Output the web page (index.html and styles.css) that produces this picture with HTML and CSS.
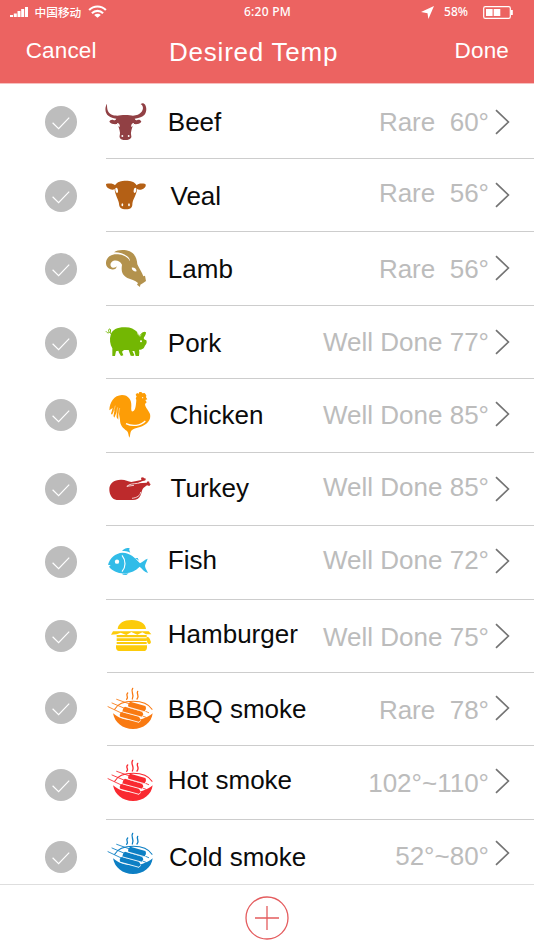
FILE: index.html
```html
<!DOCTYPE html>
<html lang="en">
<head>
<meta charset="utf-8">
<title>Desired Temp</title>
<link rel="stylesheet" href="styles.css">
</head>
<body>
<svg class="defs" aria-hidden="true">
  <symbol id="check" viewBox="0 0 32 32"><circle cx="16" cy="16" r="16" fill="#bdbdbd"/><path d="M7.6 16.8l6 5.8L24.2 11.6" fill="none" stroke="#fff" stroke-width="1.2"/></symbol>
  <symbol id="chevron" viewBox="0 0 15 26"><path d="M1 1.2L13.4 13 1 24.8" fill="none" stroke="#747474" stroke-width="1.7"/></symbol>
  <symbol id="smoke" viewBox="225 24 150 150">
    <path d="M249 115C260 124 270 130 284 133C300 137 322 137 336 132C349 128 360 122 368 115C365 143 340 162 309 162C278 162 254 143 249 115Z" fill="currentColor"/>
    <g fill="currentColor">
      <path d="M301 80L346 93Q351 100 343 111L295 97Q292 87 301 80Z"/>
      <path d="M285 95L336 110Q344 119 335 127L278 112Q276 101 285 95Z"/>
      <path d="M275 111L325 124Q335 132 328 142L271 127Q266 117 275 111Z"/>
    </g>
    <g fill="none" stroke="currentColor" stroke-width="3.2" stroke-linecap="round">
      <path d="M254 103C263 86 284 79 310 79C337 79 357 89 366 103"/>
      <path d="M260 73L302 88M246 84L286 101M234 95L276 115" stroke-width="2.6"/>
      <path d="M347 109L356 113M338 123L348 127" stroke-width="2.6"/>
      <path d="M293 54C285 62 298 65 290 73M308 40C300 51 315 59 307 72M323 49C318 57 330 61 321 72" stroke-width="4"/>
    </g>
    <path d="M279 111L334 126L341 121M294 96L343 110L349 105M269 126L327 142L332 136" fill="none" stroke="#fff" stroke-width="2.6"/>
  </symbol>
</svg>
<div class="screen">
  <header class="header">
    <div class="status">
      <div class="status-left">
        <svg class="signal" viewBox="0 0 18 10"><path d="M0 8h3v2H0zM3.8 6.5h3V10h-3zM7.5 4h3v6h-3zM11.2 2h3v8h-3zM15 0h3v10h-3z" fill="#fff"/></svg>
        <span class="carrier">中国移动</span>
        <svg class="wifi" viewBox="0 0 20 14"><g fill="none" stroke="#fff" stroke-width="2.3"><path d="M1 5.4C6 .4 14 .4 19 5.4M4 8.9C7.4 5.5 12.6 5.5 16 8.9"/></g><path d="M6.4 10.9C8.4 9 11.6 9 13.6 10.9L10 13.6Z" fill="#fff"/></svg>
      </div>
      <span class="clock">6:20 PM</span>
      <div class="status-right">
        <svg class="locate" viewBox="0 0 13 13"><path d="M13 0L7.4 13 6.5 7.2 0 6Z" fill="#fff"/></svg>
        <span class="percent">58%</span>
        <svg class="battery" viewBox="0 0 30 13"><rect x=".7" y=".7" width="26.6" height="11.6" rx="1.6" fill="none" stroke="#fff" stroke-width="1.2"/><path d="M3 3h6.6v7H3zM10.7 3h6.6v7h-6.6zM28 4h1.8v5H28z" fill="#fff"/></svg>
      </div>
    </div>
    <nav class="nav"><span class="cancel">Cancel</span><h1>Desired Temp</h1><span class="done">Done</span></nav>
  </header>
  <ul class="list">
    <li class="row beef"><svg class="check"><use href="#check"/></svg><div class="content">
      <svg class="icon" viewBox="225 21 150 150"><path fill="currentColor" d="M231 41C224 52 224 70 236 78C244 84 254 86 259 86C256 91 254 92 250 90C244 88 240 91 238 95C244 103 254 103 262 102C266 110 269 120 270 128C270 135 268 137 269 142C272 150 278 150 286 150C294 150 300 150 304 142C305 137 302 134 303 128C304 119 307 110 311 102C319 103 328 103 334 95C331 90 327 88 321 91C317 91 316 89 314 86C324 85 336 82 343 75C351 66 351 46 342 41C338 39 335 40 332 43C340 46 341 58 335 65C328 73 320 76 309 77C300 74 272 74 262 77C250 76 240 74 235 65C231 58 231 50 231 41Z"/><g fill="#fff"><path d="M261 99C267 99 271 105 269 111C264 110 261 104 261 99ZM312 99C306 99 302 105 304 111C309 110 312 104 312 99Z"/><circle cx="277" cy="138" r="2.8"/><circle cx="296" cy="138" r="2.8"/></g></svg>
      <span class="label">Beef</span><span class="value">Rare  60°</span><svg class="chevron"><use href="#chevron"/></svg></div></li>
    <li class="row veal"><svg class="check"><use href="#check"/></svg><div class="content">
      <svg class="icon" viewBox="225 243 150 150"><path fill="currentColor" d="M255 286C260 275 275 272 288 272C301 272 315 275 320 286C324 281 334 279 346 282C350 288 344 297 333 299C327 300 324 299 321 297C321 310 311 325 308 336C306 342 309 348 303 354C298 359 278 359 272 354C266 348 268 342 266 336C263 325 254 310 254 297C250 300 242 300 235 295C230 292 228 287 228 282C240 279 251 281 255 286Z"/><g fill="#fff"><ellipse cx="260" cy="301" rx="4" ry="8" transform="rotate(-12 260 301)"/><ellipse cx="315" cy="301" rx="4" ry="8" transform="rotate(12 315 301)"/><ellipse cx="277" cy="344" rx="2.6" ry="4.5"/><ellipse cx="297" cy="344" rx="2.6" ry="4.5"/></g></svg>
      <span class="label">Veal</span><span class="value">Rare  56°</span><svg class="chevron"><use href="#chevron"/></svg></div></li>
    <li class="row lamb"><svg class="check"><use href="#check"/></svg><div class="content">
      <svg class="icon" viewBox="225 24 150 150"><path fill="currentColor" d="M252 52C263 43 285 43 299 49C316 57 321 72 322 88C327 100 336 112 340 124L345 122L348 138C342 142 337 146 331 149L330 156L321 149L324 144C315 136 303 133 292 129C276 120 273 108 276 89C269 76 254 73 245 81C238 88 242 97 249 98C255 99 258 96 260 93C260 102 252 105 244 103C232 100 227 92 228 82C230 65 246 56 264 58C282 60 294 67 300 79C302 66 278 51 252 52Z"/><path fill="#fff" d="M305 98C313 97 319 101 320 109C313 110 306 107 305 98Z"/></svg>
      <span class="label">Lamb</span><span class="value">Rare  56°</span><svg class="chevron"><use href="#chevron"/></svg></div></li>
    <li class="row pork"><svg class="check"><use href="#check"/></svg><div class="content">
      <svg class="icon" viewBox="225 246 150 150"><path fill="currentColor" d="M242 300C246 284 262 277 283 277C300 276 312 282 323 292C325 300 329 303 333 296C338 290 344 288 348 292C348 298 345 303 342 307C340 311 342 314 349 316C351 321 350 326 347 329C343 333 344 339 337 342C334 345 330 344 327 344L328 352L327 363L317 363L313 348L307 348L313 360L310 363L302 362L296 345L282 345L276 350L280 361L273 363L267 353L265 347L258 349L255 363L247 363L247 340C240 328 238 313 242 300Z"/><path fill="none" stroke="currentColor" stroke-width="3" d="M243 297C239 293 244 283 240 282C234 281 235 292 239 292C234 295 231 293 228 289"/><path d="M322 289C323 300 329 307 334 300" fill="none" stroke="#fff" stroke-width="2"/><circle cx="333" cy="319" r="3" fill="#fff"/></svg>
      <span class="label">Pork</span><span class="value">Well Done 77°</span><svg class="chevron"><use href="#chevron"/></svg></div></li>
    <li class="row chicken"><svg class="check"><use href="#check"/></svg><div class="content">
      <svg class="icon" viewBox="225 30 150 150"><path fill="currentColor" d="M238 91C239 66 252 46 276 45C295 45 305 60 304 77C303 89 304 96 309 94C317 90 318 74 319 59C316 56 318 52 320 50L317 44L321 39L326 41L328 36L334 36L337 40L344 39L349 46L348 52L352 58L346 60L350 67L345 72C346 84 356 91 360 102C364 119 352 131 338 138C324 144 308 145 303 154C300 160 301 168 298 173C295 166 296 159 291 153C279 144 270 136 270 119L266 98L265 119L259 111L260 96L253 113L250 107L254 90L246 104L243 101L248 84Z"/><g fill="none" stroke="#fff"><path stroke-width="3.6" d="M288 131C307 140 331 138 346 123"/><path stroke-width="1.2" d="M267 119Q264 99 269 84M259 114Q258 98 263 82M249 108Q250 92 256 77"/></g><circle cx="338" cy="53" r="1.8" fill="#fff"/></svg>
      <span class="label">Chicken</span><span class="value">Well Done 85°</span><svg class="chevron"><use href="#chevron"/></svg></div></li>
    <li class="row turkey"><svg class="check"><use href="#check"/></svg><div class="content">
      <svg class="icon" viewBox="225 252 150 150"><path fill="currentColor" d="M238 330C237 309 253 298 275 299C286 299 295 304 304 306L334 300L333 293L339 292L343 295L348 296L345 302L339 303L324 310L350 308L353 304L358 305L358 309L362 313L358 318L351 316L341 323C333 331 336 344 327 353C320 361 307 360 290 360L260 360C247 358 239 346 238 330Z"/><path d="M291 319C299 311 308 312 323 310L344 303M290 319L312 316M306 355C321 353 331 347 332 336" fill="none" stroke="#fff" stroke-width="2.3"/></svg>
      <span class="label">Turkey</span><span class="value">Well Done 85°</span><svg class="chevron"><use href="#chevron"/></svg></div></li>
    <li class="row fish"><svg class="check"><use href="#check"/></svg><div class="content">
      <svg class="icon" viewBox="225 21 150 150"><path fill="currentColor" d="M234 104C239 85 255 69 278 68C300 68 316 84 330 100C340 95 344 88 353 86C350 96 345 103 345 108C346 116 351 122 354 129C343 126 337 117 329 110C317 122 303 129 285 130C263 131 247 122 237 110L242 106ZM276 63C282 55 289 54 299 54C296 59 299 63 301 68C292 63 284 63 276 63ZM275 131L296 130L289 135L280 134ZM315 84L323 84L327 92Q321 88 315 84Z"/><circle cx="261" cy="95" r="6.5" fill="#fff"/><path d="M276 76C288 91 288 111 276 125" fill="none" stroke="#fff" stroke-width="3.4"/></svg>
      <span class="label">Fish</span><span class="value">Well Done 72°</span><svg class="chevron"><use href="#chevron"/></svg></div></li>
    <li class="row hamburger"><svg class="check"><use href="#check"/></svg><div class="content">
      <svg class="icon" viewBox="225 240 150 150"><path fill="currentColor" d="M263 297C264 280 282 270 305 270C330 270 347 281 348 297ZM249 304H356L364 313H348L337 307L322 314L304 306L289 315L272 308L260 313L243 314ZM260 315H350V322H260ZM260 325H350V333H260ZM260 336H350V342H260ZM258 346H351V353Q350 363 341 363H267Q259 362 258 353ZM350 320C359 321 360 328 362 333C365 339 359 344 355 341C351 339 352 333 350 330Z"/></svg>
      <span class="label">Hamburger</span><span class="value">Well Done 75°</span><svg class="chevron"><use href="#chevron"/></svg></div></li>
    <li class="row bbq"><svg class="check"><use href="#check"/></svg><div class="content"><svg class="icon"><use href="#smoke"/></svg>
      <span class="label">BBQ smoke</span><span class="value">Rare  78°</span><svg class="chevron"><use href="#chevron"/></svg></div></li>
    <li class="row hot"><svg class="check"><use href="#check"/></svg><div class="content"><svg class="icon"><use href="#smoke"/></svg>
      <span class="label">Hot smoke</span><span class="value">102°~110°</span><svg class="chevron"><use href="#chevron"/></svg></div></li>
    <li class="row cold"><svg class="check"><use href="#check"/></svg><div class="content"><svg class="icon"><use href="#smoke"/></svg>
      <span class="label">Cold smoke</span><span class="value">52°~80°</span><svg class="chevron"><use href="#chevron"/></svg></div></li>
  </ul>
  <footer class="footer"><svg class="add" viewBox="0 0 44 44"><g fill="none" stroke="#e45c5e" stroke-width="1.3"><circle cx="22" cy="22" r="21"/><path d="M10 22h24M22 10v24"/></g></svg></footer>
</div>
</body>
</html>
```
FILE: styles.css
```css
* { box-sizing: border-box; }
body { margin: 0; background: #fff; font-family: "Liberation Sans", Arial, sans-serif; }
svg { display: block; flex: none; }
.defs { position: absolute; width: 0; height: 0; }
.screen { width: 534px; height: 950px; display: flex; flex-direction: column; overflow: hidden; }

.header { height: 84px; flex: none; background: #ec6361; color: #fff; border-bottom: 1px solid #f7c0bf; }
.status { height: 24px; display: grid; grid-template-columns: 1fr auto 1fr; align-items: center; padding: 0 21px 0 10px; font: 500 12px/24px "Noto Sans", "Noto Sans CJK SC", sans-serif; }
.status-left, .status-right { display: flex; align-items: center; }
.status-right { justify-content: flex-end; }
.signal { width: 18px; height: 10px; }
.carrier { margin-left: 6.5px; font-family: "Noto Sans CJK SC", sans-serif; font-size: 11.7px; }
.wifi { width: 19px; height: 13px; margin-left: 6.5px; margin-top: -2px; }
.clock { letter-spacing: .25px; margin-left: 12px; }
.locate { width: 13px; height: 13px; }
.percent { margin-left: 10px; }
.battery { width: 30px; height: 13px; margin-left: 15px; }
.nav { height: 59px; display: flex; align-items: flex-start; padding: 0 25px; }
.cancel, .done { font-size: 22.5px; line-height: 26px; margin-top: 14px; letter-spacing: .15px; }
.cancel { width: 144px; padding-left: .7px; }
.done { margin-left: auto; }
h1 { margin: 12px 0 0; font-size: 26px; line-height: 32px; font-weight: 400; letter-spacing: .78px; white-space: nowrap; }

.list { flex: none; margin: 0; padding: 0; list-style: none; }
.row { height: var(--h); display: flex; align-items: flex-start; }
.check { width: 32px; height: 32px; margin: var(--check) calc(var(--line, 106px) - 77px) 0 45px; }
.content { flex: 1; height: 100%; display: flex; align-items: flex-start; border-bottom: 1px solid #cdcdcd; }
.icon { width: 50px; height: 50px; margin-top: var(--icon); margin-left: calc(105px - var(--line, 106px)); color: var(--color); }
.label, .value { font-size: 26px; line-height: 30px; white-space: pre; }
.label { margin-top: var(--label); margin-left: var(--x, 12.8px); color: #0b0b0b; }
.value { margin-top: var(--value); margin-left: auto; color: #bcbcbc; }
.chevron { width: 15px; height: 26px; margin: var(--arrow) 24px 0 6px; }

.beef { --h: 75px; --check: 22px; --icon: 13px; --label: 23px; --value: 23px; --arrow: 24.5px; --color: #914044; }
.veal { --h: 73px; --check: 20.7px; --icon: 12px; --label: 22px; --value: 19px; --arrow: 23.3px; --x: 15.5px; --color: #b46015; }
.lamb { --h: 74px; --check: 20.5px; --icon: 11px; --label: 22px; --value: 22px; --arrow: 23px; --color: #b3924d; }
.pork { --h: 73px; --check: 21px; --icon: 11px; --label: 22px; --value: 21px; --arrow: 23px; --color: #73b703; }
.chicken { --h: 74px; --check: 19.7px; --icon: 11px; --label: 21px; --value: 21px; --arrow: 22px; --x: 14.5px; --color: #fd9d06; }
.turkey { --h: 73px; --check: 20px; --icon: 11px; --label: 20px; --value: 19px; --arrow: 23px; --x: 15.5px; --color: #bd2a2c; }
.fish { --h: 74px; --check: 20px; --icon: 11px; --label: 19px; --value: 19px; --arrow: 22px; --color: #31bce8; }
.hamburger { --h: 73px; --check: 20px; --icon: 10px; --label: 19px; --value: 22px; --arrow: 22.7px; --line: 107px; --color: #fccb0b; }
.bbq { --h: 73px; --check: 19px; --icon: 10px; --label: 21px; --value: 22px; --arrow: 22.3px; --line: 107px; --color: #f97a12; }
.hot { --h: 74px; --check: 22.7px; --icon: 8.5px; --label: 19px; --value: 22px; --arrow: 21.7px; --color: #f92a31; }
.cold { --h: 64px; --check: 21px; --icon: 8.4px; --label: 22px; --value: 21px; --arrow: 20.3px; --x: 14px; --color: #0d7fc4; }
.cold .content { border-bottom: 0; }

.footer { flex: 1; display: flex; justify-content: center; align-items: flex-start; border-top: 1px solid #dedede; padding-top: 11px; }
.add { width: 44px; height: 44px; }
```
